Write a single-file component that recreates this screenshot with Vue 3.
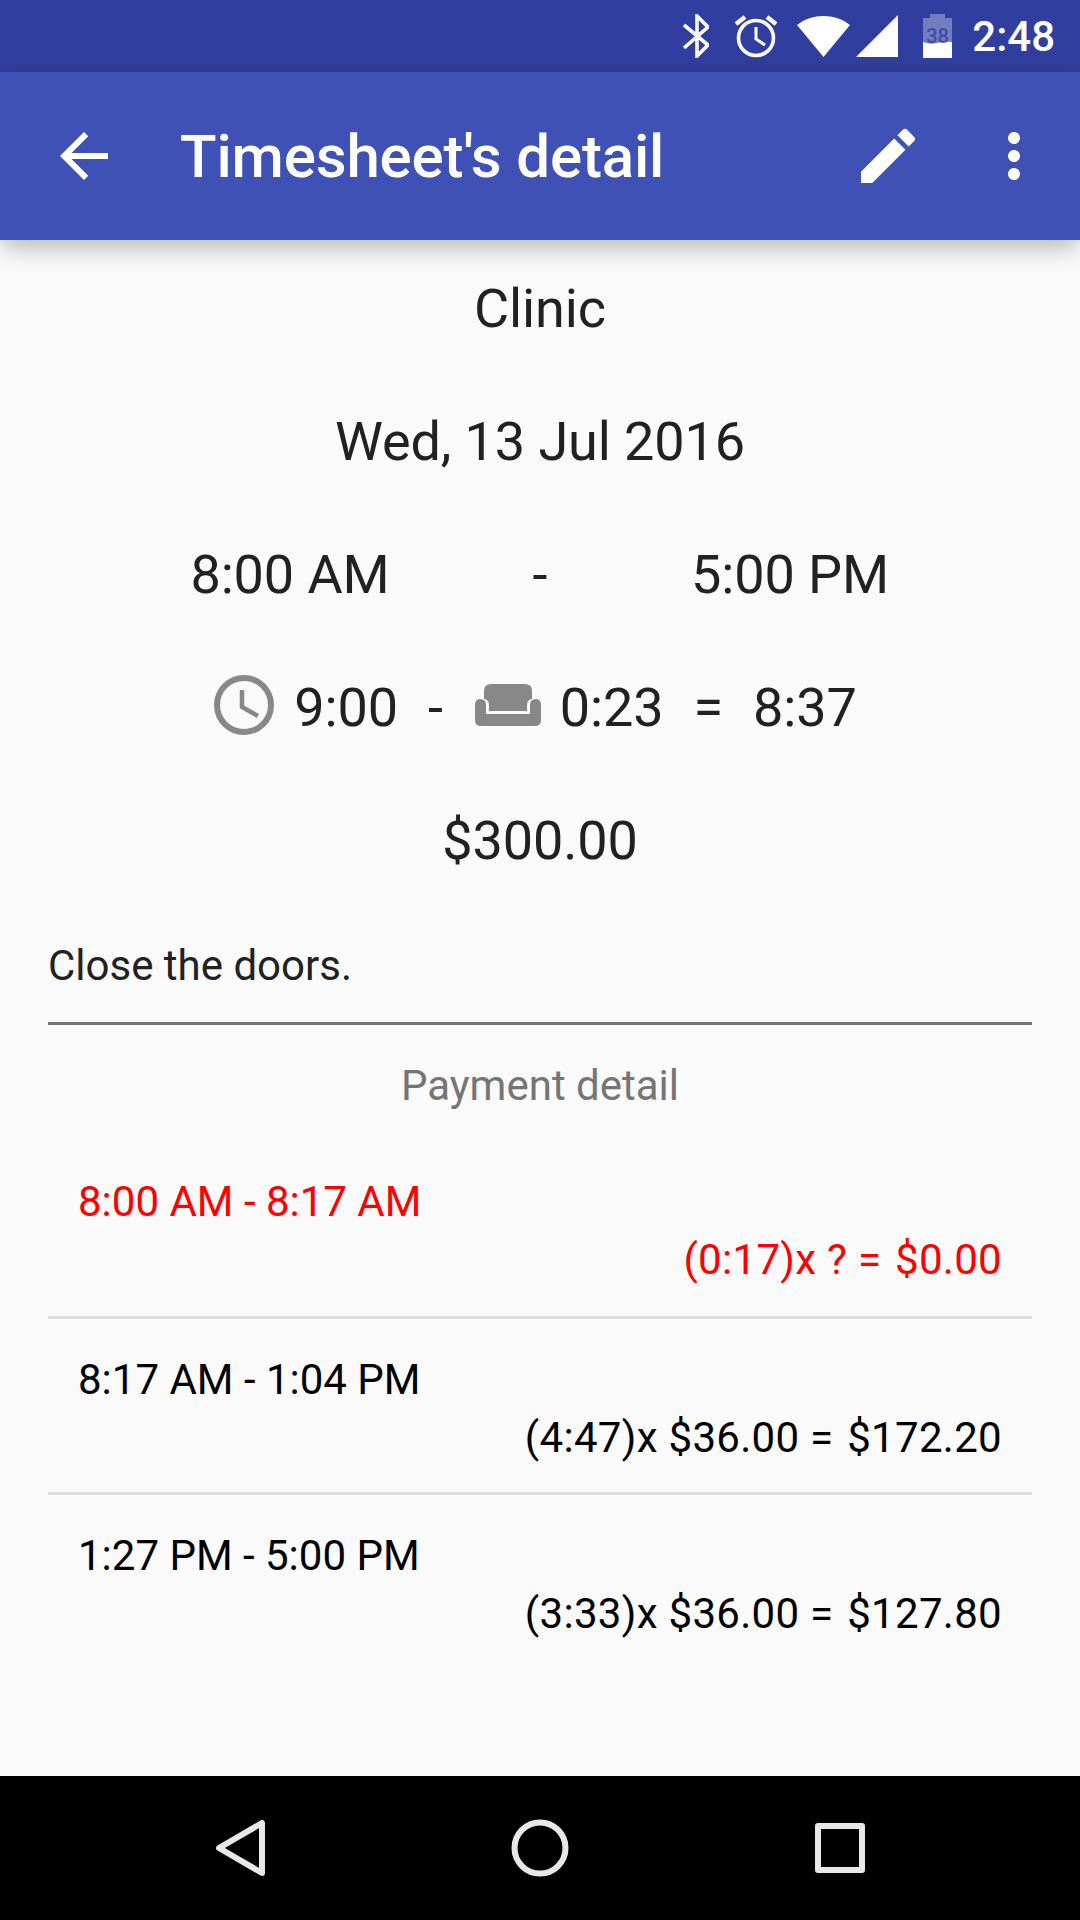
<template>
  <div class="screen">
    <div class="status-bar">
      <svg class="st-bt" width="26" height="44" viewBox="0 0 26 44" fill="none" stroke="#fff" stroke-width="3.6">
        <path d="M1 11 L25 31 L14 42 V2 L25 13 L1 34" />
      </svg>
      <svg class="st-alarm" width="42" height="44" viewBox="0 0 42 44" fill="none" stroke="#fff">
        <circle cx="21" cy="24" r="17.5" stroke-width="3.6" />
        <path d="M21 13 V25 L30 31" stroke-width="3" />
        <path d="M1 10 L10 3 M41 10 L32 3" stroke-width="4.4" />
      </svg>
      <svg class="st-wifi" width="53" height="44" viewBox="0 0 53 44" fill="#fff">
        <path d="M0 11 C15 -1 38 -1 53 11 L26.5 43 Z" />
      </svg>
      <svg class="st-signal" width="42" height="44" viewBox="0 0 42 44" fill="#fff">
        <path d="M0 43 L42 1 V43 Z" />
      </svg>
      <svg class="st-battery" width="29" height="44" viewBox="0 0 29 44">
        <path d="M7 0 H22 V4 H29 V44 H0 V4 H7 Z" fill="#fff" fill-opacity="0.32" />
        <path d="M0 28 Q7 31 14 29 T29 28 V44 H0 Z" fill="#fff" />
        <text x="14.5" y="29" text-anchor="middle" class="st-battery-text">38</text>
      </svg>
      <span class="st-time">2:48</span>
    </div>

    <header class="app-bar">
      <svg class="ab-back" width="72" height="72" viewBox="0 0 24 24" fill="#fff">
        <path d="M20 11H7.83l5.59-5.59L12 4l-8 8 8 8 1.41-1.41L7.83 13H20v-2z" />
      </svg>
      <h1 class="ab-title">Timesheet's detail</h1>
      <svg class="ab-edit" width="72" height="72" viewBox="0 0 24 24" fill="#fff">
        <path d="M3 17.25V21h3.75L17.81 9.94l-3.75-3.75L3 17.25zM20.71 7.04a1 1 0 0 0 0-1.41l-2.34-2.34a1 1 0 0 0-1.41 0l-1.83 1.83 3.75 3.75 1.83-1.83z" />
      </svg>
      <svg class="ab-more" width="72" height="72" viewBox="0 0 24 24" fill="#fff">
        <path d="M12 8c1.1 0 2-.9 2-2s-.9-2-2-2-2 .9-2 2 .9 2 2 2zm0 2c-1.1 0-2 .9-2 2s.9 2 2 2 2-.9 2-2-.9-2-2-2zm0 6c-1.1 0-2 .9-2 2s.9 2 2 2 2-.9 2-2-.9-2-2-2z" />
      </svg>
    </header>

    <main class="content">
      <div class="line">Clinic</div>
      <div class="line">Wed, 13 Jul 2016</div>
      <div class="line times">
        <span>8:00 AM</span>
        <span>-</span>
        <span>5:00 PM</span>
      </div>
      <div class="line totals">
        <svg class="clock" width="60" height="60" viewBox="0 0 60 60" fill="none" stroke="#888">
          <circle cx="30" cy="30" r="27" stroke-width="6" />
          <path d="M28 15 V32 L44 41" stroke-width="4.5" />
        </svg>
        <span class="t-a">9:00</span>
        <span class="t-b">-</span>
        <svg class="sofa" width="66" height="42" viewBox="0 0 66 42" fill="#888">
          <path d="M9 7 Q9 0 16 0 H50 Q57 0 57 7 V15 Q52 15 52 22 V27 H14 V22 Q14 15 9 15 Z" />
          <path d="M0 21 Q0 15 5 15 Q11 15 11 21 V30 H55 V21 Q55 15 61 15 Q66 15 66 21 V36 Q66 42 60 42 H6 Q0 42 0 36 Z" />
        </svg>
        <span class="t-c">0:23</span>
        <span class="t-d">=</span>
        <span class="t-e">8:37</span>
      </div>
      <div class="line">$300.00</div>
      <p class="note">Close the doors.</p>
      <h2 class="section-title">Payment detail</h2>
      <ul class="payments">
        <li v-for="row in rows" :key="row.range" class="payment" :class="{ unpaid: row.unpaid }">
          <div class="range">{{ row.range }}</div>
          <div class="sum">{{ row.calc }} <span class="amount">{{ row.amount }}</span></div>
        </li>
      </ul>
    </main>

    <nav class="nav-bar">
      <svg width="60" height="60" viewBox="0 0 60 60" fill="none" stroke="#e8e8e8" stroke-width="6" stroke-linejoin="round">
        <path d="M9 30 L52 5 V55 Z" />
      </svg>
      <svg width="60" height="60" viewBox="0 0 60 60" fill="none" stroke="#e8e8e8" stroke-width="6">
        <circle cx="30" cy="30" r="25.5" />
      </svg>
      <svg width="60" height="60" viewBox="0 0 60 60" fill="none" stroke="#e8e8e8" stroke-width="6" stroke-linejoin="round">
        <rect x="8" y="8" width="44" height="44" />
      </svg>
    </nav>
  </div>
</template>

<script setup>
const rows = [
  { range: '8:00 AM - 8:17 AM', calc: '(0:17)x ? =', amount: '$0.00', unpaid: true },
  { range: '8:17 AM - 1:04 PM', calc: '(4:47)x $36.00 =', amount: '$172.20' },
  { range: '1:27 PM - 5:00 PM', calc: '(3:33)x $36.00 =', amount: '$127.80' }
]
</script>

<style>
html, body {
  margin: 0;
  background: #fafafa;
}
</style>

<style scoped>
.screen {
  width: 1080px;
  height: 1920px;
  display: flex;
  flex-direction: column;
  overflow: hidden;
  background: #fafafa;
  font-family: Roboto, "Liberation Sans", sans-serif;
}

.status-bar {
  height: 72px;
  flex: none;
  display: flex;
  align-items: center;
  padding: 0 25px 0 0;
  justify-content: flex-end;
  background: #303f9f;
  color: #fff;
  box-sizing: border-box;
}

.st-bt { margin-right: 26px; }
.st-alarm { margin-right: 20px; }
.st-wifi { margin-right: 6px; }
.st-signal { margin-right: 25px; }
.st-battery { margin-right: 20px; }
.st-battery-text {
  font-size: 20px;
  font-weight: 500;
  fill: #303f9f;
  fill-opacity: 0.8;
}
.st-time {
  font-size: 42px;
  font-weight: 500;
}

.app-bar {
  height: 168px;
  flex: none;
  position: relative;
  z-index: 2;
  display: flex;
  align-items: center;
  background: #3f51b5;
  box-shadow: 0 8px 24px -2px rgba(0, 0, 0, 0.3);
}

.ab-back { margin-left: 48px; }
.ab-title {
  margin: 0 0 0 60px;
  flex: 1;
  font-size: 60px;
  font-weight: 500;
  letter-spacing: -0.15px;
  color: #fff;
}
.ab-edit { margin-right: 54px; }
.ab-more { margin-right: 30px; }

.content {
  flex: 1;
  display: flex;
  flex-direction: column;
  padding-top: 2px;
}

.line {
  height: 133px;
  display: flex;
  align-items: center;
  justify-content: center;
  font-size: 54px;
  letter-spacing: -0.1px;
  color: #212121;
}

.times {
  display: grid;
  grid-template-columns: 420px 80px 420px;
  justify-content: center;
  justify-items: center;
}

.totals { padding-right: 9px; }
.clock { margin: 0 20px 6px 0; }
.t-b { margin: 0 32px 0 30px; }
.sofa { margin: 0 19px 6px 0; }
.t-d { margin: 0 30px; }

.note {
  margin: 34px 48px 0;
  padding-bottom: 31px;
  font-size: 42px;
  line-height: 50px;
  color: #212121;
  border-bottom: 3px solid #757575;
}

.section-title {
  margin: 36px 0 0;
  text-align: center;
  font-size: 42px;
  line-height: 50px;
  font-weight: 400;
  color: #757575;
}

.payments {
  list-style: none;
  margin: 62px 48px 0;
  padding: 0;
}

.payment {
  height: 176px;
  box-sizing: border-box;
  padding: 32px 30px 0;
  font-size: 42px;
  line-height: 58px;
  color: #000;
  border-top: 3px solid #ddd;
}
.payment:first-child {
  border-top: 0;
  height: 143px;
  padding-top: 0;
}
.payment.unpaid { color: #f00; }
.sum { text-align: right; letter-spacing: 0.3px; }
.amount { margin-left: 3px; }

.nav-bar {
  height: 144px;
  flex: none;
  display: flex;
  align-items: center;
  justify-content: space-between;
  padding: 0 210px 0 210px;
  background: #000;
}
</style>
